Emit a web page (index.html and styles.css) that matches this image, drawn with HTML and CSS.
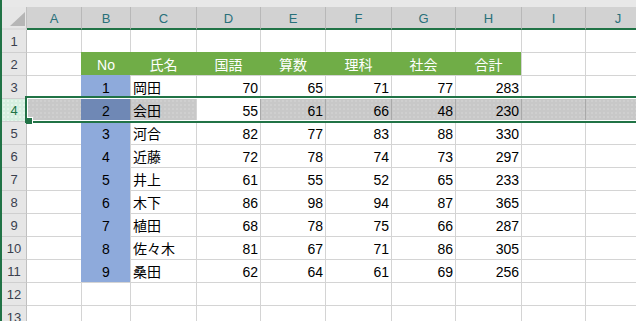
FILE: index.html
```html
<!DOCTYPE html>
<html lang="ja">
<head>
    <meta charset="UTF-8">
    <meta name="viewport" content="width=device-width, initial-scale=1.0">
    <title>成績表 - Excel</title>
    <link rel="stylesheet" href="styles.css">
</head>
<body>
    <div class="sheet" id="sheet">
        <div class="selection"></div>
        <div class="fill-handle"></div>
    </div>

    <script>
        const cols = ['A', 'B', 'C', 'D', 'E', 'F', 'G', 'H', 'I', 'J'];
        const head = ['No', '氏名', '国語', '算数', '理科', '社会', '合計'];

        const rows = [
            [1, '岡田', 70, 65, 71, 77, 283],
            [2, '会田', 55, 61, 66, 48, 230],
            [3, '河合', 82, 77, 83, 88, 330],
            [4, '近藤', 72, 78, 74, 73, 297],
            [5, '井上', 61, 55, 52, 65, 233],
            [6, '木下', 86, 98, 94, 87, 365],
            [7, '植田', 68, 78, 75, 66, 287],
            [8, '佐々木', 81, 67, 71, 86, 305],
            [9, '桑田', 62, 64, 61, 69, 256]
        ];

        const selectedRow = 4;
        const activeCol = 3; // D

        const sheet = document.getElementById('sheet');

        function add(cls, text) {
            const div = document.createElement('div');
            div.className = cls;
            if (text !== undefined && text !== '') div.textContent = text;
            sheet.appendChild(div);
        }

        // Column headers
        add('corner');
        cols.forEach(c => add('colhdr', c));

        // Rows 1-13
        for (let r = 1; r <= 13; r++) {
            const sel = r === selectedRow;
            add('rowhdr' + (r === 1 ? ' first' : '') + (sel ? ' sel' : ''), r);

            for (let c = 0; c < cols.length; c++) {
                let cls = 'cell';
                let text = '';
                if (r === 1) cls += ' first';
                if (c === 0) cls += ' col-a';

                if (r === 2 && c >= 1 && c <= 7) {
                    cls += ' head';
                    text = head[c - 1];
                } else if (r >= 3 && r <= 11 && c >= 1 && c <= 7) {
                    text = rows[r - 3][c - 1];
                    if (c === 1) cls += ' no';
                    else if (c > 2) cls += ' num';
                }

                if (sel && c !== activeCol) cls += ' sel';
                add(cls, text);
            }
        }
    </script>
</body>
</html>
```

FILE: styles.css
```css
html, body {
    overflow: hidden;
}

body {
    margin: 0;
    padding-top: 7px;
    border-left: 2px solid #217346;
    background: #e8e8e8;
    height: 100vh;
    box-sizing: border-box;
}

.sheet {
    position: relative;
    display: grid;
    grid-template-columns: 25px 54px 49px 66px 64px 65px 66px 64px 66px 64px 65px;
    grid-template-rows: 23px 22px repeat(12, 23px);
    font-family: "Liberation Sans", "Noto Sans CJK JP", sans-serif;
    font-size: 14px;
    line-height: 1;
    color: #000;
    background: #fff;
}

.sheet > div {
    box-sizing: border-box;
    white-space: nowrap;
    overflow: hidden;
}

/* headers */

.corner {
    position: relative;
    background: #e6e6e6;
    border-right: 1px solid #c0c0c0;
    border-bottom: 2px solid #dcdcdc;
}

.corner::after {
    content: '';
    position: absolute;
    right: 1px;
    bottom: 2px;
    width: 15px;
    height: 14px;
    background: #b6b6b6;
    clip-path: polygon(100% 0, 100% 100%, 0 100%);
}

.colhdr {
    display: flex;
    align-items: center;
    justify-content: center;
    background: #d2d2d2;
    border-left: 1px solid #b8b8b8;
    border-bottom: 2px solid #217346;
    color: #28707a;
    font-size: 13px;
    padding-top: 1px;
}

.corner + .colhdr {
    border-left: none;
}

.rowhdr {
    display: flex;
    align-items: center;
    justify-content: center;
    background: #e6e6e6;
    border-right: 1px solid #c0c0c0;
    border-top: 1px solid #cfcfcf;
    color: #3a3f4e;
    font-size: 13px;
    padding-top: 1px;
}

.rowhdr.first {
    border-top: none;
}

.rowhdr.sel {
    background-color: #d5efe0;
    background-image: radial-gradient(circle, #e4f5eb 0.7px, transparent 1px);
    background-size: 4px 4px;
    color: #217346;
}

/* cells */

.cell {
    display: flex;
    align-items: center;
    padding: 1px 2px 0;
    border-left: 1px solid #d4d4d4;
    border-top: 1px solid #d4d4d4;
}

.cell.first {
    border-top: none;
}

.cell.col-a {
    border-left: none;
}

.num {
    justify-content: flex-end;
}

.head {
    justify-content: center;
    background: #70ad47;
    border-color: #70ad47;
    color: #fff;
}

.no {
    justify-content: center;
    background: #8eaadb;
    border-color: #8eaadb;
}

.sel {
    background-color: #c8c8c8;
    background-image: radial-gradient(circle, #cfcfcf 0.7px, transparent 1px);
    background-size: 4px 4px;
    border-left-color: #a9a9a9;
}

.no.sel {
    background-color: #6f88b5;
    background-image: none;
    border-left-color: #6f88b5;
}

/* selection border over row 4 */

.selection {
    position: absolute;
    left: 23px;
    top: 89px;
    width: 700px;
    height: 27px;
    border: 2px solid #217346;
    box-shadow: inset 0 0 0 1px #fff;
    pointer-events: none;
}

.fill-handle {
    position: absolute;
    left: 24px;
    top: 111px;
    width: 6px;
    height: 6px;
    background: #217346;
    box-shadow: 1px -1px 0 #fff;
}
```
